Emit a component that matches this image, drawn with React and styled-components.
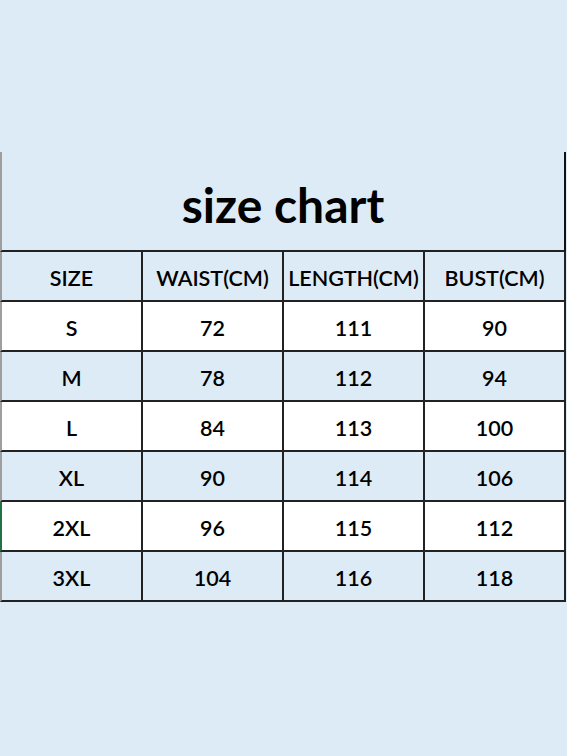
import React from "react";
import styled, { createGlobalStyle } from "styled-components";

const Global = createGlobalStyle`
  html, body { margin: 0; padding: 0; background: #ddebf7; }
  body { font-family: Lato, "Open Sans", "Liberation Sans", sans-serif; }
`;

const Page = styled.div`
  width: 567px;
  height: 756px;
  background: #ddebf7;
  padding-top: 152px;
  box-sizing: border-box;
`;

const Table = styled.div`
  display: grid;
  grid-template-columns: 143px 141px 141px 141px;
  width: 566px;
`;

const Title = styled.div`
  grid-column: 1 / -1;
  height: 100px;
  box-sizing: border-box;
  border-left: 2px solid #9e9e9e;
  border-right: 2px solid #111;
  border-bottom: 2px solid #222;
  display: flex;
  align-items: center;
  justify-content: center;
  padding-top: 6px;
  font-size: 48px;
  font-weight: 700;
  color: #000;
`;

const Cell = styled.div`
  height: 50px;
  box-sizing: border-box;
  background: ${(p) => (p.$white ? "#ffffff" : "#ddebf7")};
  border-right: 2px solid #222;
  border-bottom: 2px solid #222;
  border-left: ${(p) => (p.$first ? `2px solid ${p.$mark ? "#217346" : "#9e9e9e"}` : "none")};
  display: flex;
  align-items: center;
  justify-content: center;
  font-size: 21.5px;
  font-weight: 600;
  color: #000;
  padding-top: 4px;
`;

const header = ["SIZE", "WAIST(CM)", "LENGTH(CM)", "BUST(CM)"];
const rows = [
  ["S", "72", "111", "90"],
  ["M", "78", "112", "94"],
  ["L", "84", "113", "100"],
  ["XL", "90", "114", "106"],
  ["2XL", "96", "115", "112"],
  ["3XL", "104", "116", "118"],
];

export default function App() {
  return (
    <Page>
      <Global />
      <Table>
        <Title>size chart</Title>
        {header.map((h, i) => (
          <Cell key={h} $first={i === 0}>{h}</Cell>
        ))}
        {rows.map((r, ri) =>
          r.map((c, ci) => (
            <Cell
              key={`${ri}-${ci}`}
              $first={ci === 0}
              $white={ri % 2 === 0}
              $mark={ri === 4 && ci === 0}
            >
              {c}
            </Cell>
          ))
        )}
      </Table>
    </Page>
  );
}
